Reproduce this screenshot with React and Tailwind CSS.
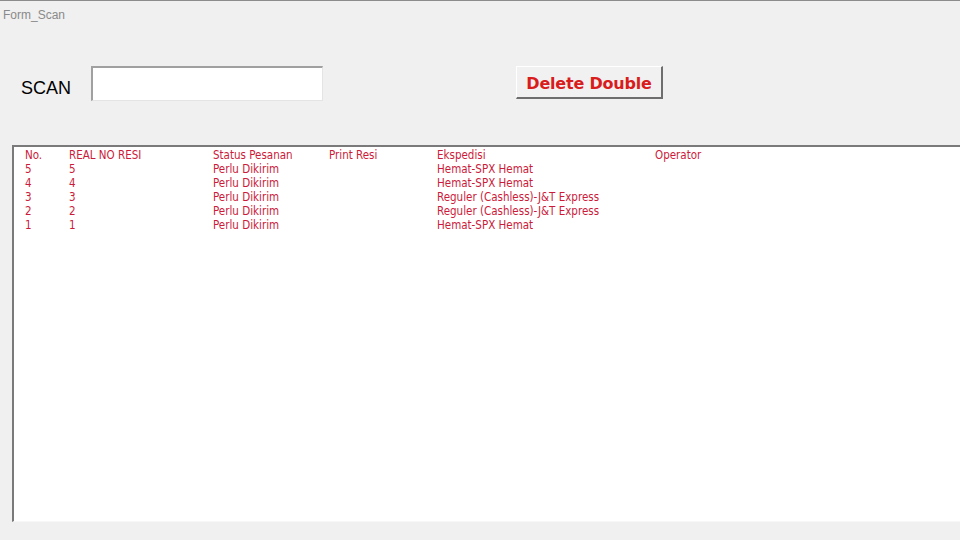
import React from "react";

// rows shown in the scan list
const rows = [
  { no: "5", resi: "5", status: "Perlu Dikirim", print: "", ekspedisi: "Hemat-SPX Hemat", operator: "" },
  { no: "4", resi: "4", status: "Perlu Dikirim", print: "", ekspedisi: "Hemat-SPX Hemat", operator: "" },
  { no: "3", resi: "3", status: "Perlu Dikirim", print: "", ekspedisi: "Reguler (Cashless)-J&T Express", operator: "" },
  { no: "2", resi: "2", status: "Perlu Dikirim", print: "", ekspedisi: "Reguler (Cashless)-J&T Express", operator: "" },
  { no: "1", resi: "1", status: "Perlu Dikirim", print: "", ekspedisi: "Hemat-SPX Hemat", operator: "" },
];

function Row({ cells }) {
  return (
    <div className="flex h-[14px] leading-[14px] whitespace-nowrap">
      <div className="w-[44px] pl-[11px] box-content">{cells[0]}</div>
      <div className="w-[144px]">{cells[1]}</div>
      <div className="w-[116px]">{cells[2]}</div>
      <div className="w-[108px]">{cells[3]}</div>
      <div className="w-[218px]">{cells[4]}</div>
      <div className="flex-1">{cells[5]}</div>
    </div>
  );
}

export default function App() {
  return (
    <main className="w-[960px] h-[540px] bg-[#f0f0f0] border-t border-[#8c8c8c] overflow-hidden flex flex-col">
      {/* title */}
      <header className="h-[30px] shrink-0 pl-[3px] text-[12px] leading-[28px] text-[#8a8a8a] font-['Liberation_Sans',sans-serif]">
        Form_Scan
      </header>

      {/* scan input + button */}
      <section className="h-[114px] shrink-0 pt-[35px] flex items-start">
        <label className="ml-[21px] w-[70px] h-[35px] flex items-center pt-[9px] text-[18px] text-black font-['Liberation_Sans',sans-serif]">
          SCAN
        </label>
        <input
          type="text"
          className="w-[232px] h-[35px] bg-white border-t-2 border-l-2 border-b border-r border-t-[#a0a0a0] border-l-[#a0a0a0] border-b-[#e4e4e4] border-r-[#e4e4e4] outline-none"
        />
        <button className="ml-[193px] w-[147px] h-[33px] pt-[3px] bg-[#f1f1f1] border border-t-[#ffffff] border-l-[#ffffff] border-b-2 border-r-2 border-b-[#6e6e6e] border-r-[#6e6e6e] text-[#d91c1c] text-[16px] font-bold font-['DejaVu_Sans',sans-serif] tracking-[-0.2px]">
          Delete Double
        </button>
      </section>

      {/* list */}
      <section className="ml-[12px] h-[377px] shrink-0 bg-white border-t-2 border-l-2 border-[#7a7a7a] border-b border-b-[#f7f7f7] pt-[1px] text-[11.5px] text-[#cc1a3a] font-['DejaVu_Sans_Condensed','DejaVu_Sans',sans-serif]">
        <Row cells={["No.", "REAL NO RESI", "Status Pesanan", "Print Resi", "Ekspedisi", "Operator"]} />
        {rows.map((r) => (
          <Row key={r.no} cells={[r.no, r.resi, r.status, r.print, r.ekspedisi, r.operator]} />
        ))}
      </section>
    </main>
  );
}
